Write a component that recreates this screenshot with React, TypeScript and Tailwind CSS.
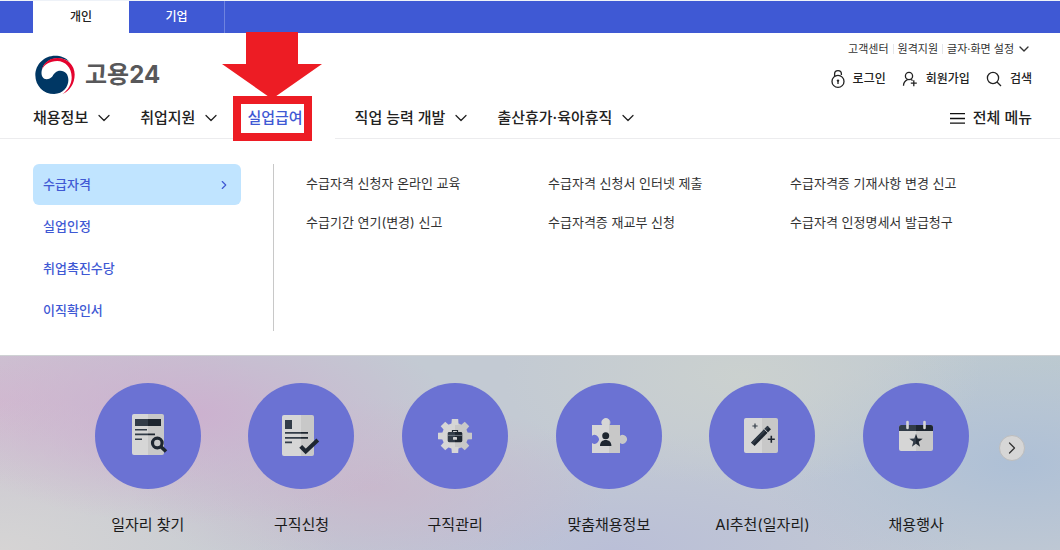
import React from 'react';
import { ChevronDown, ChevronRight } from 'lucide-react';

const navItems = [
  { label: '채용정보' },
  { label: '취업지원' },
  { label: '실업급여', active: true },
  { label: '직업 능력 개발' },
  { label: '출산휴가·육아휴직' },
];

const sideItems = ['수급자격', '실업인정', '취업촉진수당', '이직확인서'];

const subMenu = [
  '수급자격 신청자 온라인 교육',
  '수급자격 신청서 인터넷 제출',
  '수급자격증 기재사항 변경 신고',
  '수급기간 연기(변경) 신고',
  '수급자격증 재교부 신청',
  '수급자격 인정명세서 발급청구',
];

const LIGHT = 'url(#light)';
const DARK = 'url(#dark)';

const services = [
  {
    label: '일자리 찾기',
    icon: (
      <>
        <rect x="37" y="31" width="32" height="41" rx="2" fill={LIGHT} />
        <rect x="40" y="36" width="26" height="7" fill={DARK} />
        <path fill={DARK} d="M40 46h12v1.6H40zM40 50.6h20v1.6H40zM40 55.4h7v1.6h-7z" />
        <circle cx="62.3" cy="60" r="4.8" fill="none" stroke="#1e2630" strokeWidth="3.2" />
        <path d="M66 63.8l5 4.7" stroke="#1e2630" strokeWidth="3.6" />
      </>
    ),
  },
  {
    label: '구직신청',
    icon: (
      <>
        <rect x="34" y="32" width="32" height="41" rx="2" fill={LIGHT} />
        <rect x="37" y="37" width="7" height="9" fill="#323c48" />
        <path fill={DARK} d="M37 49h23v1.7H37zM37 54h23v1.7H37zM37 58.6h7v1.6h-7z" />
        <path d="M52.7 63.3l5 5.2L69.8 57" fill="none" stroke="#1e2630" strokeWidth="4" />
      </>
    ),
  },
  {
    label: '구직관리',
    icon: (
      <>
        <circle cx="53" cy="53" r="13" fill={LIGHT} />
        {[0, 45, 90, 135, 180, 225, 270, 315].map((angle) => (
          <path
            key={angle}
            d="M49.4 42l.4-6h6.4l.4 6z"
            fill={angle > 0 && angle < 180 ? '#c8c8c8' : '#d6d6d6'}
            transform={`rotate(${angle} 53 53)`}
          />
        ))}
        <path d="M50.5 49.5v-2h5v2" fill="none" stroke="#1e2630" strokeWidth="1.2" />
        <rect x="45.7" y="49" width="14.6" height="10.2" rx="1.4" fill={DARK} />
        <path d="M46 52.4h14" stroke="#8d949c" strokeWidth=".7" />
        <rect x="51" y="54" width="4" height="2.8" rx=".5" fill="#d6d6d6" />
      </>
    ),
  },
  {
    label: '맞춤채용정보',
    icon: (
      <>
        <path
          fill={LIGHT}
          d="M36 42h10.2a4.4 4.4 0 1 1 7.4 0H64v10.7a4.4 4.4 0 1 1 0 7.2V70H36V60a4.4 4.4 0 1 0 0-7.3z"
        />
        <circle cx="49.7" cy="52.7" r="3.5" fill="#1e2630" />
        <path d="M44 63c0-4 2.5-6 5.7-6s5.7 2 5.7 6z" fill="#1e2630" />
      </>
    ),
  },
  {
    label: 'AI추천(일자리)',
    icon: (
      <>
        <rect x="35" y="35" width="34" height="35" rx="2" fill={LIGHT} />
        <path d="M43.8 61.2L60.2 44.6" stroke="#1e2630" strokeWidth="5" />
        <path d="M43 60.4L59.4 43.8" stroke="#323c48" strokeWidth="2.2" />
        <path d="M55.2 46l3.6 3.6" stroke="#d0d0d0" strokeWidth="1" />
        <path d="M46 40.4v5.2M43.4 43h5.2" stroke="#323c48" strokeWidth="1.2" />
        <path d="M62.3 52.8v7M58.8 56.3h7" stroke="#1e2630" strokeWidth="1.6" />
      </>
    ),
  },
  {
    label: '채용행사',
    icon: (
      <>
        <rect x="36" y="42" width="34" height="26" rx="2" fill={LIGHT} />
        <path d="M36 48v-4a2 2 0 0 1 2-2h30a2 2 0 0 1 2 2v4z" fill={DARK} />
        <path d="M44.5 39v6M61.5 39v6" stroke="#d6d6d6" strokeWidth="2.6" strokeLinecap="round" />
        <path
          fill={DARK}
          d="M53 50.8l1.7 4.8 5 .1-4 3.1 1.4 4.9-4.1-2.9-4.1 2.9 1.4-4.9-4-3.1 5-.1z"
        />
      </>
    ),
  },
];

function Logo() {
  return (
    <a href="#" className="flex items-center gap-2.5">
      <svg viewBox="45 32 121 119" className="h-10 w-10" aria-hidden="true">
        <path
          fill="#003764"
          d="M150 52C138 38 122 33 106 33 73 33 46 59 46 92c0 32 25 57 57 57 27 0 43-21 43-42 0-17-10-28-24-28s-18 8-24 16c-5 6-11 9-18 9-10 0-17-9-15-24 3-22 21-37 45-39 16-1 30 4 40 11z"
        />
        <path
          fill="#e4032e"
          d="M66 76c4-22 24-36 47-36 30 0 52 22 52 50s-15 50-37 59c18-13 28-31 28-51 0-30-20-49-44-49-22 0-40 11-46 27z"
        />
      </svg>
      <span className="text-2xl leading-8 font-bold text-[#58585a]">고용24</span>
    </a>
  );
}

function Callout() {
  return (
    <svg
      viewBox="0 0 100 109"
      className="pointer-events-none absolute bottom-[-3px] -left-[25px] h-[109px] w-[100px] max-w-none"
      aria-hidden="true"
    >
      <path d="M24 0h52v32h24L50 67 0 32h24z" fill="#ed1c24" />
      <rect x="15" y="68" width="71" height="37" fill="none" stroke="#ed1c24" strokeWidth="8" />
    </svg>
  );
}

function Header() {
  return (
    <header>
      <div className="flex border-t border-[#eef2f8] bg-[#3f59d4] pl-[33px] text-xs leading-8 font-medium">
        <button className="w-24 bg-white text-[#222]">개인</button>
        <button className="w-24 border-r border-[#6f83df] text-white">기업</button>
      </div>

      <div className="flex items-start justify-between pr-7 pb-[3px] pl-[35px]">
        <div className="pt-[22px]">
          <Logo />
        </div>
        <div className="flex flex-col items-end pt-2">
          <div className="flex items-center text-[11px] leading-4 text-[#333]">
            <a href="#">고객센터</a>
            <span className="mx-1 h-2.5 w-px bg-gray-200" />
            <a href="#">원격지원</a>
            <span className="mx-1 h-2.5 w-px bg-gray-200" />
            <button className="flex items-center gap-0.5">
              글자·화면 설정
              <ChevronDown className="h-4 w-4" />
            </button>
          </div>
          <div className="mt-3 flex items-center gap-4 text-xs leading-5 font-medium text-[#222]">
            <a href="#" className="flex items-center gap-2">
              <svg viewBox="0 0 14 20" className="h-5 w-3.5" fill="none" stroke="#222" strokeWidth="1.3" aria-hidden="true">
                <circle cx="7" cy="12.4" r="6" />
                <path d="M3.6 7.4V5a3.4 3.4 0 0 1 6.8 0v1" />
                <path d="M7 12v3" />
                <circle cx="7" cy="11.6" r="1.2" fill="#222" stroke="none" />
              </svg>
              로그인
            </a>
            <a href="#" className="flex items-center gap-2">
              <svg viewBox="0 0 16 16" className="h-4 w-4" fill="none" stroke="#222" strokeWidth="1.3" aria-hidden="true">
                <circle cx="7" cy="5" r="3.6" />
                <path d="M1.5 14.8c0-3 1.4-5 4-6.2M9 8.4l1.6 1.2" />
                <path d="M11.8 9.2v6M8.8 12.2h6" />
              </svg>
              회원가입
            </a>
            <button className="flex items-center gap-2">
              <svg viewBox="0 0 16 16" className="h-4 w-4" fill="none" stroke="#222" strokeWidth="1.3" aria-hidden="true">
                <circle cx="7" cy="7" r="5.6" />
                <path d="M11 11l4 4" />
              </svg>
              검색
            </button>
          </div>
        </div>
      </div>

      <div className="flex items-center justify-between border-b border-[#ececee] pr-7 pl-[33px] text-[15px] leading-10 font-medium text-[#222]">
        <nav className="flex gap-[26px]">
          {navItems.map((item) => (
            <div key={item.label} className="relative">
              {item.active && <span className="absolute -right-1.5 -bottom-px -left-3.5 h-px bg-white" />}
              <a href="#" className={item.active ? 'flex items-center gap-1.5 text-[#3f59d4]' : 'flex items-center gap-1.5'}>
                {item.label}
                <ChevronDown strokeWidth={1.5} className={item.active ? 'invisible h-5 w-5' : 'h-5 w-5'} />
              </a>
              {item.active && <Callout />}
            </div>
          ))}
        </nav>
        <button className="flex items-center gap-2">
          <svg viewBox="0 0 15 11" className="h-[11px] w-[15px]" aria-hidden="true">
            <path d="M0 .6h15M0 5.5h15M0 10.2h15" stroke="#111" strokeWidth="1.3" />
          </svg>
          전체 메뉴
        </button>
      </div>
    </header>
  );
}

function MegaMenu() {
  return (
    <section className="flex gap-8 pt-[25px] pr-7 pb-6 pl-[33px] text-[13px]">
      <ul className="flex w-52 flex-col gap-px font-medium text-[#3f59d4]">
        {sideItems.map((label, i) => (
          <li key={label}>
            <a
              href="#"
              className={
                i === 0
                  ? 'flex items-center justify-between rounded-md bg-[#c0e4ff] px-2.5 leading-[41px]'
                  : 'flex items-center px-2.5 leading-[41px]'
              }
            >
              {label}
              {i === 0 && <ChevronRight className="h-3.5 w-3.5" />}
            </a>
          </li>
        ))}
      </ul>
      <ul className="grid flex-1 grid-cols-3 content-start border-l border-[#c8c8c8] pl-8 leading-[39px] text-[#333]">
        {subMenu.map((label) => (
          <li key={label}>
            <a href="#">{label}</a>
          </li>
        ))}
      </ul>
    </section>
  );
}

function Services() {
  return (
    <section className="flex flex-1 items-start border-t border-[#cfd2d4] bg-[#c3cad3] bg-[radial-gradient(ellipse_260px_110px_at_18%_30%,#ccb1cf_0%,#ccb1cf00_100%),radial-gradient(ellipse_240px_90px_at_35%_68%,#cab5cbcc_0%,#cab5cb00_100%),radial-gradient(ellipse_340px_150px_at_0%_100%,#d6d4d4_0%,#d6d4d400_100%),radial-gradient(ellipse_260px_130px_at_0%_25%,#d2bbd0_0%,#d2bbd000_100%),radial-gradient(ellipse_240px_110px_at_70%_10%,#cbd1cf_0%,#cbd1cf00_100%),radial-gradient(ellipse_260px_120px_at_96%_55%,#aec0d6_0%,#aec0d600_100%),radial-gradient(ellipse_360px_120px_at_58%_100%,#babfd7_0%,#babfd700_100%),radial-gradient(ellipse_300px_120px_at_100%_0%,#bdcacf_0%,#bdcacf00_100%)] pt-[27px] pr-[35px] pl-[71px]">
      <svg className="absolute h-0 w-0" aria-hidden="true">
        <defs>
          <linearGradient id="light" gradientUnits="userSpaceOnUse" x1="0" x2="106">
            <stop offset=".5" stopColor="#d6d6d6" />
            <stop offset=".5" stopColor="#c8c8c8" />
          </linearGradient>
          <linearGradient id="dark" gradientUnits="userSpaceOnUse" x1="0" x2="106">
            <stop offset=".5" stopColor="#323c48" />
            <stop offset=".5" stopColor="#1e2630" />
          </linearGradient>
        </defs>
      </svg>
      <ul className="grid flex-1 grid-cols-6">
        {services.map((service) => (
          <li key={service.label}>
            <a href="#" className="flex flex-col items-center gap-6 text-[15px] leading-6 text-[#1a1a1a]">
              <span className="rounded-full bg-[#6b72d3]">
                <svg viewBox="0 0 106 106" className="h-[106px] w-[106px]" aria-hidden="true">
                  {service.icon}
                </svg>
              </span>
              {service.label}
            </a>
          </li>
        ))}
      </ul>
      <button
        aria-label="다음"
        className="mt-[52px] ml-1.5 flex h-[26px] w-[26px] items-center justify-center rounded-full border border-[#bdbdbd] bg-[#d6d6d6] text-[#333]"
      >
        <ChevronRight strokeWidth={1.5} className="h-5 w-5" />
      </button>
    </section>
  );
}

export default function App() {
  return (
    <div className="flex min-h-screen flex-col bg-white font-['Inter','Noto_Sans_CJK_KR',sans-serif]">
      <Header />
      <MegaMenu />
      <Services />
    </div>
  );
}
